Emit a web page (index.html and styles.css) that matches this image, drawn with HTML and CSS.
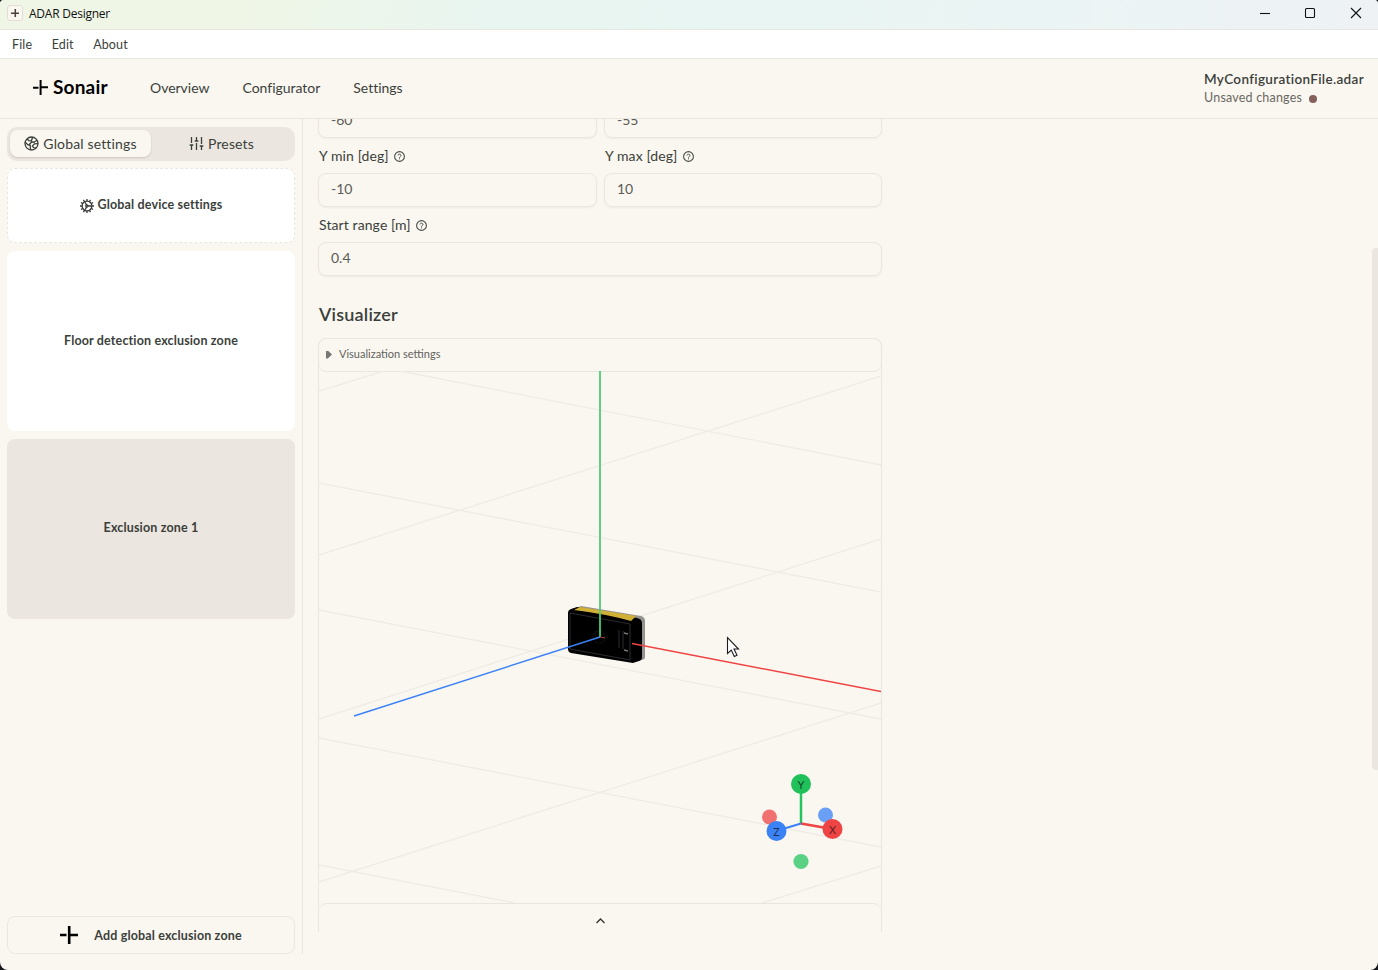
FILE: index.html
```html
<!DOCTYPE html>
<html lang="en">
<head>
<meta charset="utf-8">
<title>ADAR Designer</title>
<link rel="stylesheet" href="styles.css">
</head>
<body>
<div class="window">
  <div class="titlebar">
    <svg class="app-icon" viewBox="0 0 16 16"><rect x=".5" y=".5" width="15" height="15" rx="2.5" fill="#faf6f0" stroke="#e4dcd8"/><path d="M4 8.2h8M8.3 4v8" stroke="#4d4038" stroke-width="1.5"/></svg>
    <span class="app-title">ADAR Designer</span>
    <svg class="win-controls" viewBox="0 0 106 12" fill="none" stroke="#111" stroke-width="1.1"><path d="M0 6.5h10"/><rect x="45.5" y="1.5" width="9" height="9" rx="1"/><path d="M91 1l10 10M101 1L91 11"/></svg>
  </div>
  <nav class="menubar"><span>File</span><span>Edit</span><span>About</span></nav>
  <header class="header">
    <div class="brand"><svg class="brand-mark" viewBox="0 0 15 15"><path d="M0 7.7h5.5M7.3 7.3H15M7.6 0v15" stroke="#000" stroke-width="2"/></svg><span>Sonair</span></div>
    <nav class="nav"><span>Overview</span><span>Configurator</span><span>Settings</span></nav>
    <div class="file">
      <div class="file-name">MyConfigurationFile.adar</div>
      <div class="file-state"><span>Unsaved changes</span><i class="dot"></i></div>
    </div>
  </header>
  <div class="body">
    <aside class="sidebar">
      <div class="tabs">
        <div class="tab tab-active"><svg class="tab-icon" viewBox="0 0 15 15" fill="none" stroke="#3b3f3b" stroke-width="1.3"><circle cx="7.5" cy="7.5" r="6.5"/><path d="M2.8 3l2.2 1.600 2.400.2L8.600 1.200M1 6l3 3 2.200.300.300 4.500M4.600 9.200l3.200-3.400 2.200.4 3.200-2.200M14 7.600l-3.600.2-2 2.200 1.200 1.600 2.600.2"/></svg><span>Global settings</span></div>
        <div class="tab"><svg class="tab-icon" viewBox="0 0 15 15" fill="none" stroke="#3b3f3b" stroke-width="1.3"><path d="M2.5 1v6M2.5 9.5V14M7.5 1v3.5M7.5 7v7M12.5 1v7M12.5 10.5V14M.7 9h3.6M5.7 5h3.6M10.7 10h3.6"/></svg><span>Presets</span></div>
      </div>
      <div class="card card-device"><svg class="gear" viewBox="0 0 15 15" fill="none" stroke="#3b3f3b" stroke-width="1.4"><circle cx="7.5" cy="7.5" r="5.2"/><path d="M7.5 0v2.3M7.5 12.7V15M0 7.5h2.3M8.500 7.500h4M12.700 7.500H15M3.750 1l1.150 2M10.100 12L11.250 14M1 3.750l2 1.150M12 10.100L14 11.250M1 11.250L3 10.100M12 4.900L14 3.750M3.750 14L4.900 12M10.100 3L11.250 1M5.200 3.200l2 3.300M5.200 11.800l2-3.300"/><circle cx="7.300" cy="7.500" r="1.200"/></svg><span>Global device settings</span></div>
      <div class="card card-zone"><span>Floor detection exclusion zone</span></div>
      <div class="card card-zone card-selected"><span>Exclusion zone 1</span></div>
      <div class="add"><svg class="add-icon" viewBox="0 0 18 18"><path d="M0 9h6.5M9 9h9M9.200 0v18" stroke="#000" stroke-width="2.600"/></svg><span>Add global exclusion zone</span></div>
    </aside>
    <main class="main">
      <div class="fields">
        <div class="input">-60</div><div class="input">-55</div>
        <div class="label"><span>Y min [deg]</span><svg class="help" viewBox="0 0 11 11"><use href="#help"/></svg></div>
        <div class="label"><span>Y max [deg]</span><svg class="help" viewBox="0 0 11 11"><use href="#help"/></svg></div>
        <div class="input">-10</div><div class="input">10</div>
        <div class="label wide"><span>Start range [m]</span><svg class="help" viewBox="0 0 11 11"><g id="help" fill="none" stroke="#4a4d48"><circle cx="5.5" cy="5.5" r="4.9" stroke-width="1.1"/><path d="M4 4.400a1.500 1.300 0 1 1 2.200 1.200q-.7.300-.7 1M5.500 7.300v1"/></g></svg></div>
        <div class="input wide">0.4</div>
      </div>
      <h2 class="heading">Visualizer</h2>
      <section class="visualizer">
        <div class="summary"><i class="caret"></i><span>Visualization settings</span></div>
        <svg class="scene" viewBox="319 371 562 532">
          <g stroke="#efece8" stroke-width="1.4"><path d="M400 371L881 465M319 483L881 592M319 610L881 719M319 738L881 847M319 865L515 903M319 391L384 371M319 555L881 376M319 719L881 539M319 882L881 703M762 903L881 866"/></g>
          <path d="M573 609l8-3 60 10q4 1 4 5v36q0 3-4 3l-8 2z" fill="#96938f"/>
          <path d="M568 613q0-3 3-4l6-2 60 11q5 1 5 5v34q0 3-3 4l-6 2-62-10q-3-1-3-4z" fill="#000"/>
          <path d="M574 610l6-3 56 9-5 5q-25-7-57-11z" fill="#d0b135"/>
          <path d="M570 613l60 11v36l-60-11z" fill="none" stroke="#35373a" stroke-width=".8"/>
          <g fill="none" stroke="#36383a" stroke-width=".8"><path d="M619 630v18M623 631v18"/><path d="M624 633l4 1M624 650l4 1" stroke="#777" stroke-width="1.3"/><circle cx="599" cy="637" r="6" stroke-dasharray="1 2"/><circle cx="598" cy="634" r="3" stroke-dasharray="1 2"/></g>
          <path d="M600 371V637" stroke="#4fca79" stroke-width="1.8"/><path d="M600 637l5 1" stroke="#b93b31"/><path d="M632 643.5L881 691.5" stroke="#ef4444" stroke-width="1.4"/><path d="M600 637L354 716" stroke="#3b82f6" stroke-width="1.4"/>
          <circle cx="769.5" cy="817" r="7.5" fill="#f17171"/><circle cx="825.5" cy="815" r="7.5" fill="#699ff5"/><circle cx="801" cy="861.5" r="7.6" fill="#5bd184"/>
          <path d="M801 823.5V784" stroke="#22c55e" stroke-width="2.5"/><path d="M801 823.5L832 829" stroke="#ef4444" stroke-width="2.3"/><path d="M801 823.5L776 831" stroke="#3b82f6" stroke-width="2.3"/>
          <circle cx="801" cy="784" r="10" fill="#20c05a"/><circle cx="832.5" cy="829" r="10" fill="#ef4444"/><circle cx="776.5" cy="831" r="10" fill="#3b82f6"/>
          <g class="axis"><text x="801" y="789">Y</text><text x="832.5" y="834">X</text><text x="776.5" y="836">Z</text></g>
          <path d="M727.5 637.5v16l3.800-3.400 3 6.400 2.700-1.200-3-6.300h4.500z" fill="#fff" stroke="#1c1c22" stroke-width="1.100"/>
        </svg>
        <div class="drawer"><svg class="chevron" viewBox="0 0 9 6"><path d="M.5 5l4-4 4 4" fill="none" stroke="#333" stroke-width="1.3"/></svg></div>
      </section>
      <i class="scrollbar"></i>
    </main>
  </div>
</div>
</body>
</html>
```
FILE: styles.css
```css
* { box-sizing: border-box; }
body { margin: 0; background: #15171c; font-family: Lato, "Liberation Sans", sans-serif; font-size: 14px; color: #3b3f3b; }
svg { display: block; flex: none; }
.window { width: 1378px; height: 970px; display: flex; flex-direction: column; overflow: hidden; border-radius: 4px 4px 8px 8px; background: #faf7f0; }
.titlebar { height: 30px; flex: none; display: flex; align-items: center; padding: 0 17px 3px 7px; border-bottom: 1px solid #e8e7df; background: linear-gradient(100deg, #f0f6e5 0%, #eff6e6 17%, #e9f5f0 35%, #e9f5f3 60%, #eef2f5 100%); }
.app-icon { width: 16px; height: 16px; margin-right: 6px; }
.app-title { font: 12px "Open Sans", sans-serif; letter-spacing: -.24px; color: #111; }
.win-controls { width: 106px; height: 12px; margin-left: auto; margin-right: -5px; }
.menubar { height: 29px; flex: none; display: flex; align-items: center; gap: 19.5px; padding: 0 0 0 12px; background: #fff; border-bottom: 1px solid #e9e6df; font-size: 12.5px; letter-spacing: .14px; }
.header { height: 60px; flex: none; display: flex; align-items: center; padding: 0 14px 0 33px; border-bottom: 1px solid #e9e6df; }
.brand { display: flex; align-items: center; gap: 5px; font-size: 19px; font-weight: 700; letter-spacing: .2px; line-height: 20px; color: #000; width: 117px; padding-bottom: 4px; }
.brand-mark { width: 15px; height: 15px; margin-top: 1px; }
.nav { display: flex; gap: 33px; letter-spacing: -.02px; padding-bottom: 2px; }
.file { margin-left: auto; width: 160px; }
.file-name { font-weight: 600; font-size: 13.5px; letter-spacing: .33px; line-height: 19px; white-space: nowrap; }
.file-state { font-size: 12.5px; letter-spacing: .2px; line-height: 18px; color: #6a6863; display: flex; align-items: center; gap: 7px; }
.dot { width: 8px; height: 8px; margin-top: 2px; border-radius: 50%; background: #84605a; }
.body { flex: 1; display: flex; min-height: 0; }
.sidebar { width: 303px; height: 835px; padding: 8px 7px 0; border-right: 1px solid #e9e6df; display: flex; flex-direction: column; }
.tabs { height: 34px; display: grid; grid-template-columns: 141px 141px; background: #ebe6df; border-radius: 10px; padding: 3px; margin-bottom: 7px; }
.tab { display: flex; align-items: center; justify-content: center; gap: 4px; border-radius: 8px; height: 27px; padding-bottom: 1px; letter-spacing: .15px; }
.tab-active { background: #faf7f0; box-shadow: 0 1px 2px #0002; }
.tab-icon { width: 15px; height: 15px; margin-top: 1px; }
.card { display: flex; align-items: center; justify-content: center; background: #fff; border-radius: 8px; font-size: 12.5px; font-weight: 700; letter-spacing: .15px; width: 288px; padding-bottom: 1px; }
.card-device { height: 75px; border: 1px dashed #e9e6df; gap: 4px; padding-bottom: 2px; }
.gear { width: 14px; height: 14px; margin-top: 2px; }
.card-zone { height: 180px; margin-top: 8px; }
.card-selected { background: #ebe6df; padding-bottom: 3px; }
.add { margin-top: auto; height: 38px; width: 288px; border: 1px solid #ebe6df; border-radius: 8px; display: flex; align-items: center; justify-content: center; gap: 16px; font-size: 12.5px; font-weight: 700; letter-spacing: .15px; }
.add-icon { width: 18px; height: 18px; }
.main { flex: 1; position: relative; overflow: hidden; padding-left: 15px; }
.fields { margin-top: -15px; width: 564px; display: grid; grid-template-columns: 279px 278px; column-gap: 7px; }
.wide { grid-column: 1 / 3; }
.input { height: 34px; border: 1px solid #ebe6df; border-radius: 8px; padding: 0 12px; line-height: 29px; color: #5b5b57; box-shadow: 0 1px 2px #0000000c; }
.label { height: 35px; display: flex; align-items: center; gap: 5px; padding: 0 0 1px 1px; letter-spacing: .1px; }
.help { width: 11px; height: 11px; margin-top: 2px; }
.heading { margin: 0; height: 62px; padding: 16px 0 0 1px; line-height: 44px; font-size: 18px; letter-spacing: .2px; font-weight: 600; }
.visualizer { width: 564px; height: 594px; border: 1px solid #e9e6df; border-bottom: 0; border-radius: 8px 8px 0 0; }
.summary { height: 32px; display: flex; align-items: center; gap: 6px; padding: 0 7px 4px; font-size: 11px; color: #62625e; border-radius: 8px; box-shadow: 0 1px 1px #00000012; }
.summary span { padding-left: 1px; }
.caret { width: 6px; height: 8px; margin-top: 3px; background: #777873; clip-path: polygon(0 0, 30% 0, 100% 50%, 30% 100%, 0 100%); }
.scene { width: 562px; height: 532px; }
.axis { font: 11px Inter, sans-serif; text-anchor: middle; fill: #111b; }
.drawer { height: 30px; border-top: 1px solid #e9e6df; border-radius: 8px 8px 0 0; display: flex; justify-content: center; padding-top: 14px; }
.chevron { width: 9px; height: 6px; }
.scrollbar { position: absolute; right: 0; top: 129px; width: 6px; height: 522px; background: #ebe6df; border-radius: 4px 0 0 4px; }
```
